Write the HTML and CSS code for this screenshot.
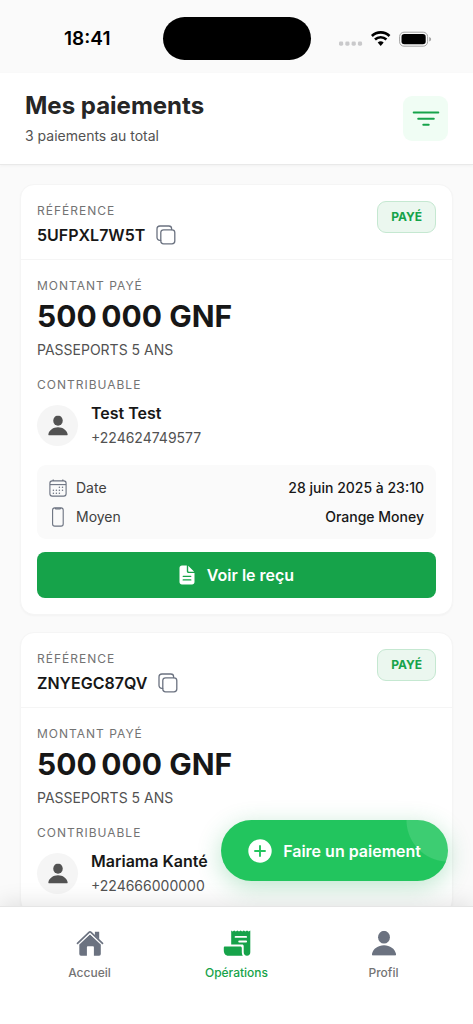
FILE: index.html
```html
<!DOCTYPE html>
<html lang="fr">
<head>
<meta charset="utf-8">
<meta name="viewport" content="width=device-width, initial-scale=1">
<title>Mes paiements</title>
<link rel="stylesheet" href="styles.css">
</head>
<body>
<svg class="sprite" aria-hidden="true">
  <symbol id="copy" viewBox="0 0 20 20"><g fill="none" stroke="currentColor" stroke-width="1.3" stroke-linejoin="round" stroke-linecap="round"><rect x="4.8" y="4.8" width="14" height="14" rx="2.8"/><path d="M15.6 4.6v-.8A2.8 2.8 0 0 0 12.8 1H4A3 3 0 0 0 1 4v8.600a2.800 2.800 0 0 0 2.800 2.800h.9"/></g></symbol>
  <symbol id="person" viewBox="0 0 24 24"><ellipse cx="12" cy="6.200" rx="5.700" ry="6.100"/><path d="M12 14c5.800 0 10.400 3.400 11.500 8.100.3 1.200-.3 1.800-1.300 1.800H1.800c-1 0-1.600-.6-1.300-1.800C1.600 17.400 6.200 14 12 14Z"/></symbol>
  <symbol id="calendar" viewBox="0 0 18 18"><g fill="none" stroke="currentColor"><rect x=".9" y="1.900" width="16.200" height="15.200" rx="2.300" stroke-width="1.100"/><path d="M1 5.600h16" stroke-width="1.100"/><path d="M4.200.4v1.600M13.800.4v1.600" stroke-width="1.200"/></g><g fill="currentColor"><circle cx="10.400" cy="8.300" r=".75"/><circle cx="13.500" cy="8.300" r=".75"/><circle cx="4.400" cy="11.300" r=".75"/><circle cx="7.400" cy="11.300" r=".75"/><circle cx="10.400" cy="11.300" r=".75"/><circle cx="13.500" cy="11.300" r=".75"/><circle cx="4.400" cy="14.200" r=".75"/><circle cx="7.400" cy="14.200" r=".75"/><circle cx="10.400" cy="14.200" r=".75"/></g></symbol>
  <symbol id="phone" viewBox="0 0 18 20"><g fill="none" stroke="currentColor" stroke-width="1.100"><rect x="3.600" y=".9" width="10.600" height="18.200" rx="2.200"/><path d="M6.300 1v.2c0 .5.300.7.700.7h3.800c.4 0 .7-.2.7-.7V1"/></g></symbol>
  <symbol id="document" viewBox="0 0 16 20"><path fill="currentColor" d="M3 .5h4.800v5.700c0 1.100.8 1.900 1.900 1.900h5.800v8.900c0 1.500-1 2.500-2.500 2.500H3C1.500 19.500.5 18.500.5 17V3C.5 1.500 1.500.5 3 .5Z"/><path fill="currentColor" d="M9.200.8 15.200 6.800H9.900a.7.700 0 0 1-.7-.7Z"/><path class="doc-lines" d="M4.200 11.300h7.600M4.200 14.900h7.600"/></symbol>
</svg>
<div class="app">
  <div class="status">
    <div class="status-side"><span class="clock">18:41</span></div>
    <div class="island"></div>
    <div class="status-side">
      <svg class="status-icons" viewBox="0 0 94 18" aria-hidden="true">
        <g fill="#c9c9cb"><rect x="0" y="11.500" width="4.200" height="4.200" rx="1.400"/><rect x="6.300" y="11.500" width="4.200" height="4.200" rx="1.400"/><rect x="12.600" y="11.500" width="4.200" height="4.200" rx="1.400"/><rect x="18.900" y="11.500" width="4.200" height="4.200" rx="1.400"/></g>
        <g fill="none" stroke="#000" stroke-width="2.600"><path d="M32.900 6a12.600 12.600 0 0 1 17.600 0"/><path d="M36 9.500a8.200 8.200 0 0 1 11.400 0"/></g>
        <path d="M38.700 12.600a4.400 4.400 0 0 1 6 0L41.700 16Z"/>
        <rect x="60.600" y="2.200" width="28" height="14" rx="4.400" fill="none" stroke="#a3a3a3"/>
        <rect x="62.500" y="4.100" width="24.200" height="10.200" rx="2.800"/>
        <path fill="#a3a3a3" d="M90.200 6.900c1.500.5 1.900 1.300 1.900 2.300s-.4 1.800-1.900 2.300Z"/>
      </svg>
    </div>
  </div>

  <header class="header">
    <div>
      <h1 class="title">Mes paiements</h1>
      <p class="subtitle">3 paiements au total</p>
    </div>
    <button class="filter" type="button" aria-label="Filtrer">
      <svg class="filter-icon" viewBox="0 0 28 18" aria-hidden="true"><path d="M1.700 2.500h24.600M6.200 8.800h15.600M11.300 14.800h5.400"/></svg>
    </button>
  </header>

  <div class="content">
    <main class="list">
      <article class="card">
        <div class="card-head">
          <div>
            <p class="label">RÉFÉRENCE</p>
            <div class="ref"><span>5UFPXL7W5T</span><button class="copy" type="button" aria-label="Copier la référence"><svg viewBox="0 0 20 20" aria-hidden="true"><use href="#copy"/></svg></button></div>
          </div>
          <span class="badge">PAYÉ</span>
        </div>
        <div class="card-body">
          <p class="label">MONTANT PAYÉ</p>
          <p class="amount">500&#8239;000 GNF</p>
          <p class="service">PASSEPORTS 5 ANS</p>
          <p class="label payer-label">CONTRIBUABLE</p>
          <div class="payer">
            <span class="avatar"><svg viewBox="0 0 24 24" aria-hidden="true"><use href="#person"/></svg></span>
            <div><p class="name">Test Test</p><p class="tel">+224624749577</p></div>
          </div>
          <dl class="details">
            <div class="detail"><dt><svg viewBox="0 0 18 18" aria-hidden="true"><use href="#calendar"/></svg>Date</dt><dd>28 juin 2025 à 23:10</dd></div>
            <div class="detail"><dt><svg viewBox="0 0 18 20" aria-hidden="true"><use href="#phone"/></svg>Moyen</dt><dd>Orange Money</dd></div>
          </dl>
          <button class="receipt" type="button"><svg viewBox="0 0 16 20" aria-hidden="true"><use href="#document"/></svg>Voir le reçu</button>
        </div>
      </article>

      <article class="card">
        <div class="card-head">
          <div>
            <p class="label">RÉFÉRENCE</p>
            <div class="ref"><span>ZNYEGC87QV</span><button class="copy" type="button" aria-label="Copier la référence"><svg viewBox="0 0 20 20" aria-hidden="true"><use href="#copy"/></svg></button></div>
          </div>
          <span class="badge">PAYÉ</span>
        </div>
        <div class="card-body">
          <p class="label">MONTANT PAYÉ</p>
          <p class="amount">500&#8239;000 GNF</p>
          <p class="service">PASSEPORTS 5 ANS</p>
          <p class="label payer-label">CONTRIBUABLE</p>
          <div class="payer">
            <span class="avatar"><svg viewBox="0 0 24 24" aria-hidden="true"><use href="#person"/></svg></span>
            <div><p class="name">Mariama Kanté</p><p class="tel">+224666000000</p></div>
          </div>
        </div>
      </article>
    </main>
    <button class="fab" type="button">
      <svg viewBox="0 0 24 24" aria-hidden="true"><circle cx="12" cy="12" r="11.700" fill="#fff"/><path d="M12 7v10M7 12h10" fill="none" stroke="#22c55e" stroke-width="1.900" stroke-linecap="round"/></svg>
      <span>Faire un paiement</span>
    </button>
  </div>

  <nav class="tabs">
    <a class="tab" href="#accueil">
      <svg viewBox="0 0 28 28" aria-hidden="true"><path d="M14 5.300 24.800 15.200V25.100a1.700 1.700 0 0 1-1.700 1.700h-5.200V18.200a.9.900 0 0 0-.9-.9h-5.200a.9.900 0 0 0-.9.900v8.600H5a1.700 1.700 0 0 1-1.700-1.700V15.200Z"/><path d="M1.500 14.300 13 3.400a1.500 1.500 0 0 1 2 0L26.500 14.300" fill="none" stroke="currentColor" stroke-width="1.700" stroke-linecap="round"/><path d="M18.900 2.800h4.300v7.700l-4.300-4.100Z"/><path d="M3.300 15 14 4.900 24.700 15" fill="none" stroke="#fff" stroke-width=".8"/></svg>
      Accueil
    </a>
    <a class="tab active" href="#operations" aria-current="page">
      <svg viewBox="0 0 28 28" aria-hidden="true"><path d="M8.200 1.500 9.600 2.400 11.200 1.500 12.800 2.400 14.400 1.500 16 2.400 17.600 1.500 19.200 2.400 20.800 1.500 22.400 2.400 24 1.500 25.600 2.400 27.300 1.500V23.300c0 2.300-1.300 3.500-3.300 3.500s-3.300-1.200-3.300-3.500V17.100c0-1-.6-1.600-1.600-1.600H8.200Z"/><path d="M2 17.500h15.200c1 0 1.600.6 1.600 1.600v4.200c0 1.400.3 2.500 1 3.500H5.500c-3 0-4.700-2.200-4.700-5.500v-2.600C.8 17.900 1.200 17.500 2 17.500Z"/><path d="M12.600 7.900h10.500M16.200 12.500h6.900" fill="none" stroke="#fff" stroke-width="1.900" stroke-linecap="round"/></svg>
      Opérations
    </a>
    <a class="tab" href="#profil">
      <svg viewBox="0 0 28 28" aria-hidden="true"><use href="#person" x="1.500" y="1.700" width="25" height="25"/></svg>
      Profil
    </a>
  </nav>
</div>
</body>
</html>
```
FILE: styles.css
```css
* { box-sizing: border-box; }

body {
  margin: 0;
  font-family: Inter, "Liberation Sans", sans-serif;
  color: #171717;
  background: #fafafa;
}

h1, p, dl, dd { margin: 0; }
button { font: inherit; color: inherit; border: 0; padding: 0; background: none; cursor: pointer; }
svg { display: block; flex: none; }
.sprite { position: absolute; width: 0; height: 0; }

.app { display: flex; flex-direction: column; height: 100vh; overflow: hidden; }

/* Status bar */
.status { display: flex; align-items: center; padding: 17px 0 13px; }
.status-side { flex: 1; display: flex; justify-content: center; }
.status-side:first-child { padding-left: 12px; }
.status-side:last-child { padding-right: 12px; }
.clock { font-size: 19px; line-height: 24px; font-weight: 600; color: #000; }
.island { width: 148px; height: 43px; border-radius: 22px; background: #000; }
.status-icons { width: 94px; height: 18px; }

/* Header */
.header {
  display: flex;
  align-items: center;
  justify-content: space-between;
  padding: 17px 25px;
  background: #fff;
  border-bottom: 1px solid #e9e9e9;
  box-shadow: 0 1px 3px rgba(0, 0, 0, 0.04);
}
.title { font-size: 24px; line-height: 32px; font-weight: 700; color: #262626; }
.subtitle { margin-top: 3px; font-size: 14px; line-height: 22px; color: #525252; }
.filter { display: grid; place-items: center; width: 45px; height: 45px; border-radius: 9px; background: #f0fdf4; }
.filter-icon { width: 28px; height: 18px; fill: none; stroke: #16a34a; stroke-width: 2; stroke-linecap: round; }

/* Payments */
.content { position: relative; flex: 1; min-height: 0; }
.list { display: flex; flex-direction: column; gap: 17px; height: 100%; padding: 19px 20px 0; overflow: hidden; }
.card {
  flex: none;
  background: #fff;
  border: 1px solid #f5f5f5;
  border-radius: 14px;
  box-shadow: 0 1px 2px rgba(0, 0, 0, 0.03);
}
.card-head {
  display: flex;
  justify-content: space-between;
  align-items: flex-start;
  padding: 16px 16px 12px;
  border-bottom: 1px solid #f5f5f5;
}
.card-body { padding: 16px; }
.label { font-size: 12px; line-height: 20px; letter-spacing: 1px; color: #737373; }
.ref { display: flex; align-items: center; gap: 11px; margin-top: 2px; font-size: 16px; line-height: 24px; font-weight: 600; }
.copy svg { width: 20px; height: 20px; color: #6b7280; }
.badge {
  padding: 6px 13px;
  border: 1px solid #c5e8d1;
  border-radius: 9px;
  background: #ebf7ef;
  color: #16a34a;
  font-size: 12px;
  line-height: 18px;
  font-weight: 700;
}
.amount { font-size: 30px; line-height: 40px; font-weight: 700; }
.service { margin-top: 4px; font-size: 14px; line-height: 20px; color: #525252; }
.payer-label { margin-top: 15px; }
.payer { display: flex; align-items: center; gap: 13px; margin-top: 6px; }
.avatar { display: grid; place-items: center; width: 41px; height: 41px; border-radius: 50%; background: #f5f5f5; }
.avatar svg { width: 20px; height: 21px; fill: #525252; }
.name { font-size: 16px; line-height: 24px; font-weight: 600; }
.tel { margin-top: 2px; font-size: 14px; line-height: 22px; color: #525252; }
.details { margin-top: 16px; padding: 8px 12px; border-radius: 9px; background: #fafafa; font-size: 14px; line-height: 29px; }
.detail { display: flex; justify-content: space-between; }
.detail dt { display: flex; align-items: center; gap: 9px; color: #404040; }
.detail dt svg { width: 18px; height: 20px; color: #6b7280; }
.detail dd { font-weight: 500; }
.receipt {
  display: flex;
  align-items: center;
  justify-content: center;
  gap: 12px;
  width: 100%;
  height: 46px;
  margin-top: 13px;
  border-radius: 8px;
  background: #16a34a;
  color: #fff;
  font-size: 16px;
  font-weight: 600;
}
.receipt svg { width: 16px; height: 20px; }
.doc-lines { fill: none; stroke: #16a34a; stroke-width: 1.3; stroke-linecap: round; }

/* Floating action */
.fab {
  position: absolute;
  right: 25px;
  bottom: 25px;
  display: flex;
  align-items: center;
  gap: 11px;
  height: 61px;
  padding: 0 27px;
  border-radius: 31px;
  background: radial-gradient(circle at 100% 0, #3dcd72 41px, transparent 42px) #22c55e;
  box-shadow: 0 6px 24px rgba(34, 170, 90, 0.3);
  color: #fff;
  font-size: 16px;
  font-weight: 600;
}
.fab svg { width: 24px; height: 24px; }

/* Tab bar */
.tabs {
  position: relative;
  display: flex;
  padding: 22px 16px 42px;
  background: #fff;
  border-top: 1px solid #e5e5e5;
  box-shadow: 0 -4px 20px rgba(0, 0, 0, 0.1);
}
.tab {
  flex: 1;
  display: flex;
  flex-direction: column;
  align-items: center;
  gap: 7px;
  color: #737373;
  font-size: 12px;
  line-height: 18px;
  font-weight: 500;
  text-decoration: none;
}
.tab svg { width: 28px; height: 28px; color: #6b7280; fill: currentColor; }
.tab.active, .tab.active svg { color: #16a34a; }
```
